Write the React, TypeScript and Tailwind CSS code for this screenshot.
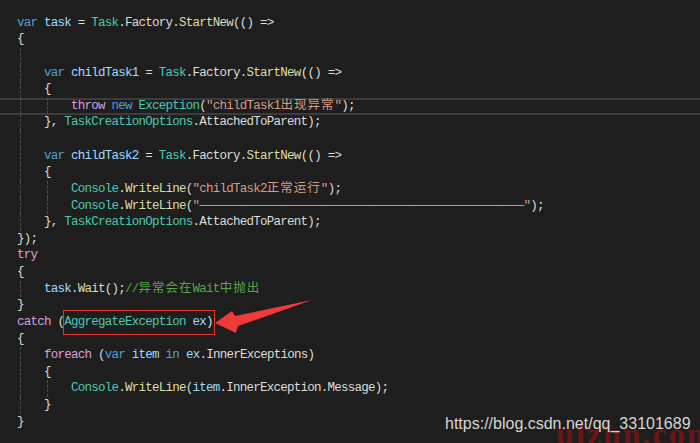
import React from 'react'

type Tok = [string, string]

// token colours, VS dark theme
const C: Record<string, string> = {
  k: 'text-[#569cd6]',
  c: 'text-[#d8a0df]',
  v: 'text-[#9cdcfe]',
  t: 'text-[#4ec9b0]',
  m: 'text-[#dcdcaa]',
  s: 'text-[#d69d85]',
  g: 'text-[#57a64a]',
  p: 'text-[#dcdcdc]',
}

const dashes = '—'.repeat(48)

const lines: { toks: Tok[]; guides: number[]; current?: boolean }[] = [
  { toks: [['k', 'var'], ['p', ' '], ['v', 'task'], ['p', ' = '], ['t', 'Task'], ['p', '.Factory.'], ['m', 'StartNew'], ['p', '(() =>']], guides: [] },
  { toks: [['p', '{']], guides: [] },
  { toks: [], guides: [20] },
  { toks: [['p', '    '], ['k', 'var'], ['p', ' '], ['v', 'childTask1'], ['p', ' = '], ['t', 'Task'], ['p', '.Factory.'], ['m', 'StartNew'], ['p', '(() =>']], guides: [20] },
  { toks: [['p', '    {']], guides: [20] },
  { toks: [['p', '        '], ['c', 'throw'], ['p', ' '], ['k', 'new'], ['p', ' '], ['t', 'Exception'], ['p', '('], ['s', '"childTask1出现异常"'], ['p', ');']], guides: [20, 47], current: true },
  { toks: [['p', '    }, '], ['t', 'TaskCreationOptions'], ['p', '.AttachedToParent);']], guides: [20] },
  { toks: [], guides: [20] },
  { toks: [['p', '    '], ['k', 'var'], ['p', ' '], ['v', 'childTask2'], ['p', ' = '], ['t', 'Task'], ['p', '.Factory.'], ['m', 'StartNew'], ['p', '(() =>']], guides: [20] },
  { toks: [['p', '    {']], guides: [20] },
  { toks: [['p', '        '], ['t', 'Console'], ['p', '.'], ['m', 'WriteLine'], ['p', '('], ['s', '"childTask2正常运行"'], ['p', ');']], guides: [20, 47] },
  { toks: [['p', '        '], ['t', 'Console'], ['p', '.'], ['m', 'WriteLine'], ['p', '('], ['s', '"' + dashes + '"'], ['p', ');']], guides: [20, 47] },
  { toks: [['p', '    }, '], ['t', 'TaskCreationOptions'], ['p', '.AttachedToParent);']], guides: [20] },
  { toks: [['p', '});']], guides: [] },
  { toks: [['c', 'try']], guides: [] },
  { toks: [['p', '{']], guides: [] },
  { toks: [['p', '    '], ['v', 'task'], ['p', '.'], ['m', 'Wait'], ['p', '();'], ['g', '//异常会在Wait中抛出']], guides: [20] },
  { toks: [['p', '}']], guides: [] },
  { toks: [['c', 'catch'], ['p', ' ('], ['t', 'AggregateException'], ['p', ' '], ['v', 'ex'], ['p', ')']], guides: [] },
  { toks: [['p', '{']], guides: [] },
  { toks: [['p', '    '], ['c', 'foreach'], ['p', ' ('], ['k', 'var'], ['p', ' '], ['v', 'item'], ['p', ' '], ['k', 'in'], ['p', ' '], ['v', 'ex'], ['p', '.InnerExceptions)']], guides: [20] },
  { toks: [['p', '    {']], guides: [20] },
  { toks: [['p', '        '], ['t', 'Console'], ['p', '.'], ['m', 'WriteLine'], ['p', '('], ['v', 'item'], ['p', '.InnerException.Message);']], guides: [20, 47] },
  { toks: [['p', '    }']], guides: [20] },
  { toks: [['p', '}']], guides: [] },
]

function withCjk(text: string) {
  return text.split(/([\u4e00-\u9fff]+)/).map((part, i) =>
    /[\u4e00-\u9fff]/.test(part) ? (
      <span key={i} className="tracking-[1px]">{part}</span>
    ) : (
      part
    )
  )
}

export default function App() {
  return (
    <div className="relative w-[700px] h-[443px] overflow-hidden bg-[#1e1e1e]">
      <div className="pt-[14.7px] font-['Liberation_Mono','Noto_Sans_CJK_SC',monospace] text-[12.5px] tracking-[-0.75px]">
        {lines.map((line, i) => (
          <div key={i} className="relative h-[16.625px] leading-[16.625px] pl-[17px] whitespace-pre">
            {line.current && (
              <div className="absolute inset-x-0 top-0 -bottom-[1px] border-y-2 border-[#3c3c3c]" />
            )}
            {line.guides.map((x) => (
              <span
                key={x}
                className={`absolute top-0 bottom-0 border-l border-dashed border-[#4e4e4e] ${x === 20 ? 'left-[20px]' : 'left-[47px]'}`}
              />
            ))}
            {line.toks.map(([k, text], j) => (
              <span key={j} className={`relative ${C[k]}`}>
                {withCjk(text)}
              </span>
            ))}
          </div>
        ))}
      </div>

      {/* red annotation box */}
      <div className="absolute left-[63px] top-[310px] w-[152px] h-[25px] border border-[#e5322f]" />

      {/* red arrow */}
      <svg className="absolute inset-0" width="700" height="443" viewBox="0 0 700 443">
        <polygon
          points="215,323 232,311 235,316 312,300 238,326 236,333"
          fill="#ef3a3a"
        />
      </svg>

      {/* watermarks */}
      <div className="absolute left-[556px] top-[418px] font-['Liberation_Serif',serif] font-bold text-[32px] tracking-[2px] text-[#6a1616] leading-none">
        uizhn.com
      </div>
      <div className="absolute left-[445px] top-[414px] font-['Liberation_Sans',Arial,sans-serif] text-[16px] text-[#d6d6d6] leading-[20px]">
        https://blog.csdn.net/qq_33101689
      </div>
    </div>
  )
}
